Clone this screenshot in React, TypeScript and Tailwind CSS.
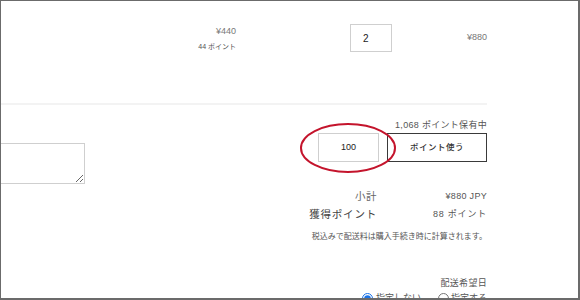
const FONT = "font-['Liberation_Sans','Noto_Sans_CJK_JP',sans-serif]";

function PointsField() {
  return (
    <div className="relative mt-[2px] flex gap-[8px]">
      <div className="flex h-[29px] w-[61px] items-center justify-center border border-[#cfcfcf] text-[9px] font-medium text-[#222]">
        100
      </div>
      <button className="h-[29px] w-[100px] border border-[#3a3a3a] text-[8.5px] font-medium tracking-[0.5px] text-[#333]">
        ポイント使う
      </button>
      <svg
        className="pointer-events-none absolute left-[-18px] top-[-10px]"
        width="96"
        height="50"
        viewBox="0 0 96 50"
      >
        <ellipse cx="48" cy="25" rx="47" ry="24" fill="none" stroke="#c4142c" strokeWidth="2" />
      </svg>
    </div>
  );
}

export default function App() {
  return (
    <div
      className={`${FONT} h-[300px] w-[580px] overflow-hidden border-l border-t border-r-2 border-b-2 border-[#6b6b6b] bg-white`}
    >
      <div className="pr-[91px]">
        {/* line item */}
        <div className="flex h-[104px] items-start border-b-2 border-[#f3f3f3] pt-[23px]">
          <div className="w-[235px] text-right">
            <div className="text-[9px] leading-[14px] text-[#777]">¥440</div>
            <div className="mt-[3px] text-[7px] leading-[12px] text-[#555]">44 ポイント</div>
          </div>
          <div className="ml-[114px] flex h-[28px] w-[42px] items-center border border-[#cfcfcf] pl-[12px] text-[10px] text-[#222]">
            2
          </div>
          <div className="flex h-[28px] flex-1 items-center justify-end text-[9px] text-[#777]">¥880</div>
        </div>

        {/* note + summary */}
        <div className="flex">
          <div className="flex-1 overflow-hidden">
            <textarea className="-ml-[10px] mt-[38px] block h-[41px] w-[94px] border border-[#cfcfcf] outline-none" />
          </div>
          <div className="flex w-[188px] flex-col items-end">
            <div className="pt-[14px] text-[9px] leading-[12px] tracking-[0.3px] text-[#555]">1,068 ポイント保有中</div>
            <PointsField />
            <div className="mt-[27px] grid grid-cols-[78px_110px] gap-y-[4px] leading-[14px]">
              <span className="text-right text-[10.5px] tracking-[0.5px] text-[#666]">小計</span>
              <span className="text-right text-[9px] tracking-[0.3px] text-[#555]">¥880 JPY</span>
              <span className="text-right text-[10.5px] tracking-[0.8px] text-[#444]">獲得ポイント</span>
              <span className="text-right text-[9px] tracking-[0.8px] text-[#555]">88 ポイント</span>
            </div>
            <div className="mt-[10px] text-[8px] leading-[12px] text-[#555]">
              税込みで配送料は購入手続き時に計算されます。
            </div>
            <div className="mt-[34px] text-[9px] leading-[12px] tracking-[0.3px] text-[#555]">配送希望日</div>
            <div className="mt-[3px] flex items-center text-[9px] leading-[12px] text-[#555]">
              <label className="flex items-center gap-[3px]">
                <input type="radio" name="d" defaultChecked className="m-0 h-[11px] w-[11px] accent-[#1a73e8]" />
                指定しない
              </label>
              <label className="ml-[17px] flex items-center gap-[2px]">
                <input type="radio" name="d" className="m-0 h-[11px] w-[11px]" />
                指定する
              </label>
            </div>
          </div>
        </div>
      </div>
    </div>
  );
}
